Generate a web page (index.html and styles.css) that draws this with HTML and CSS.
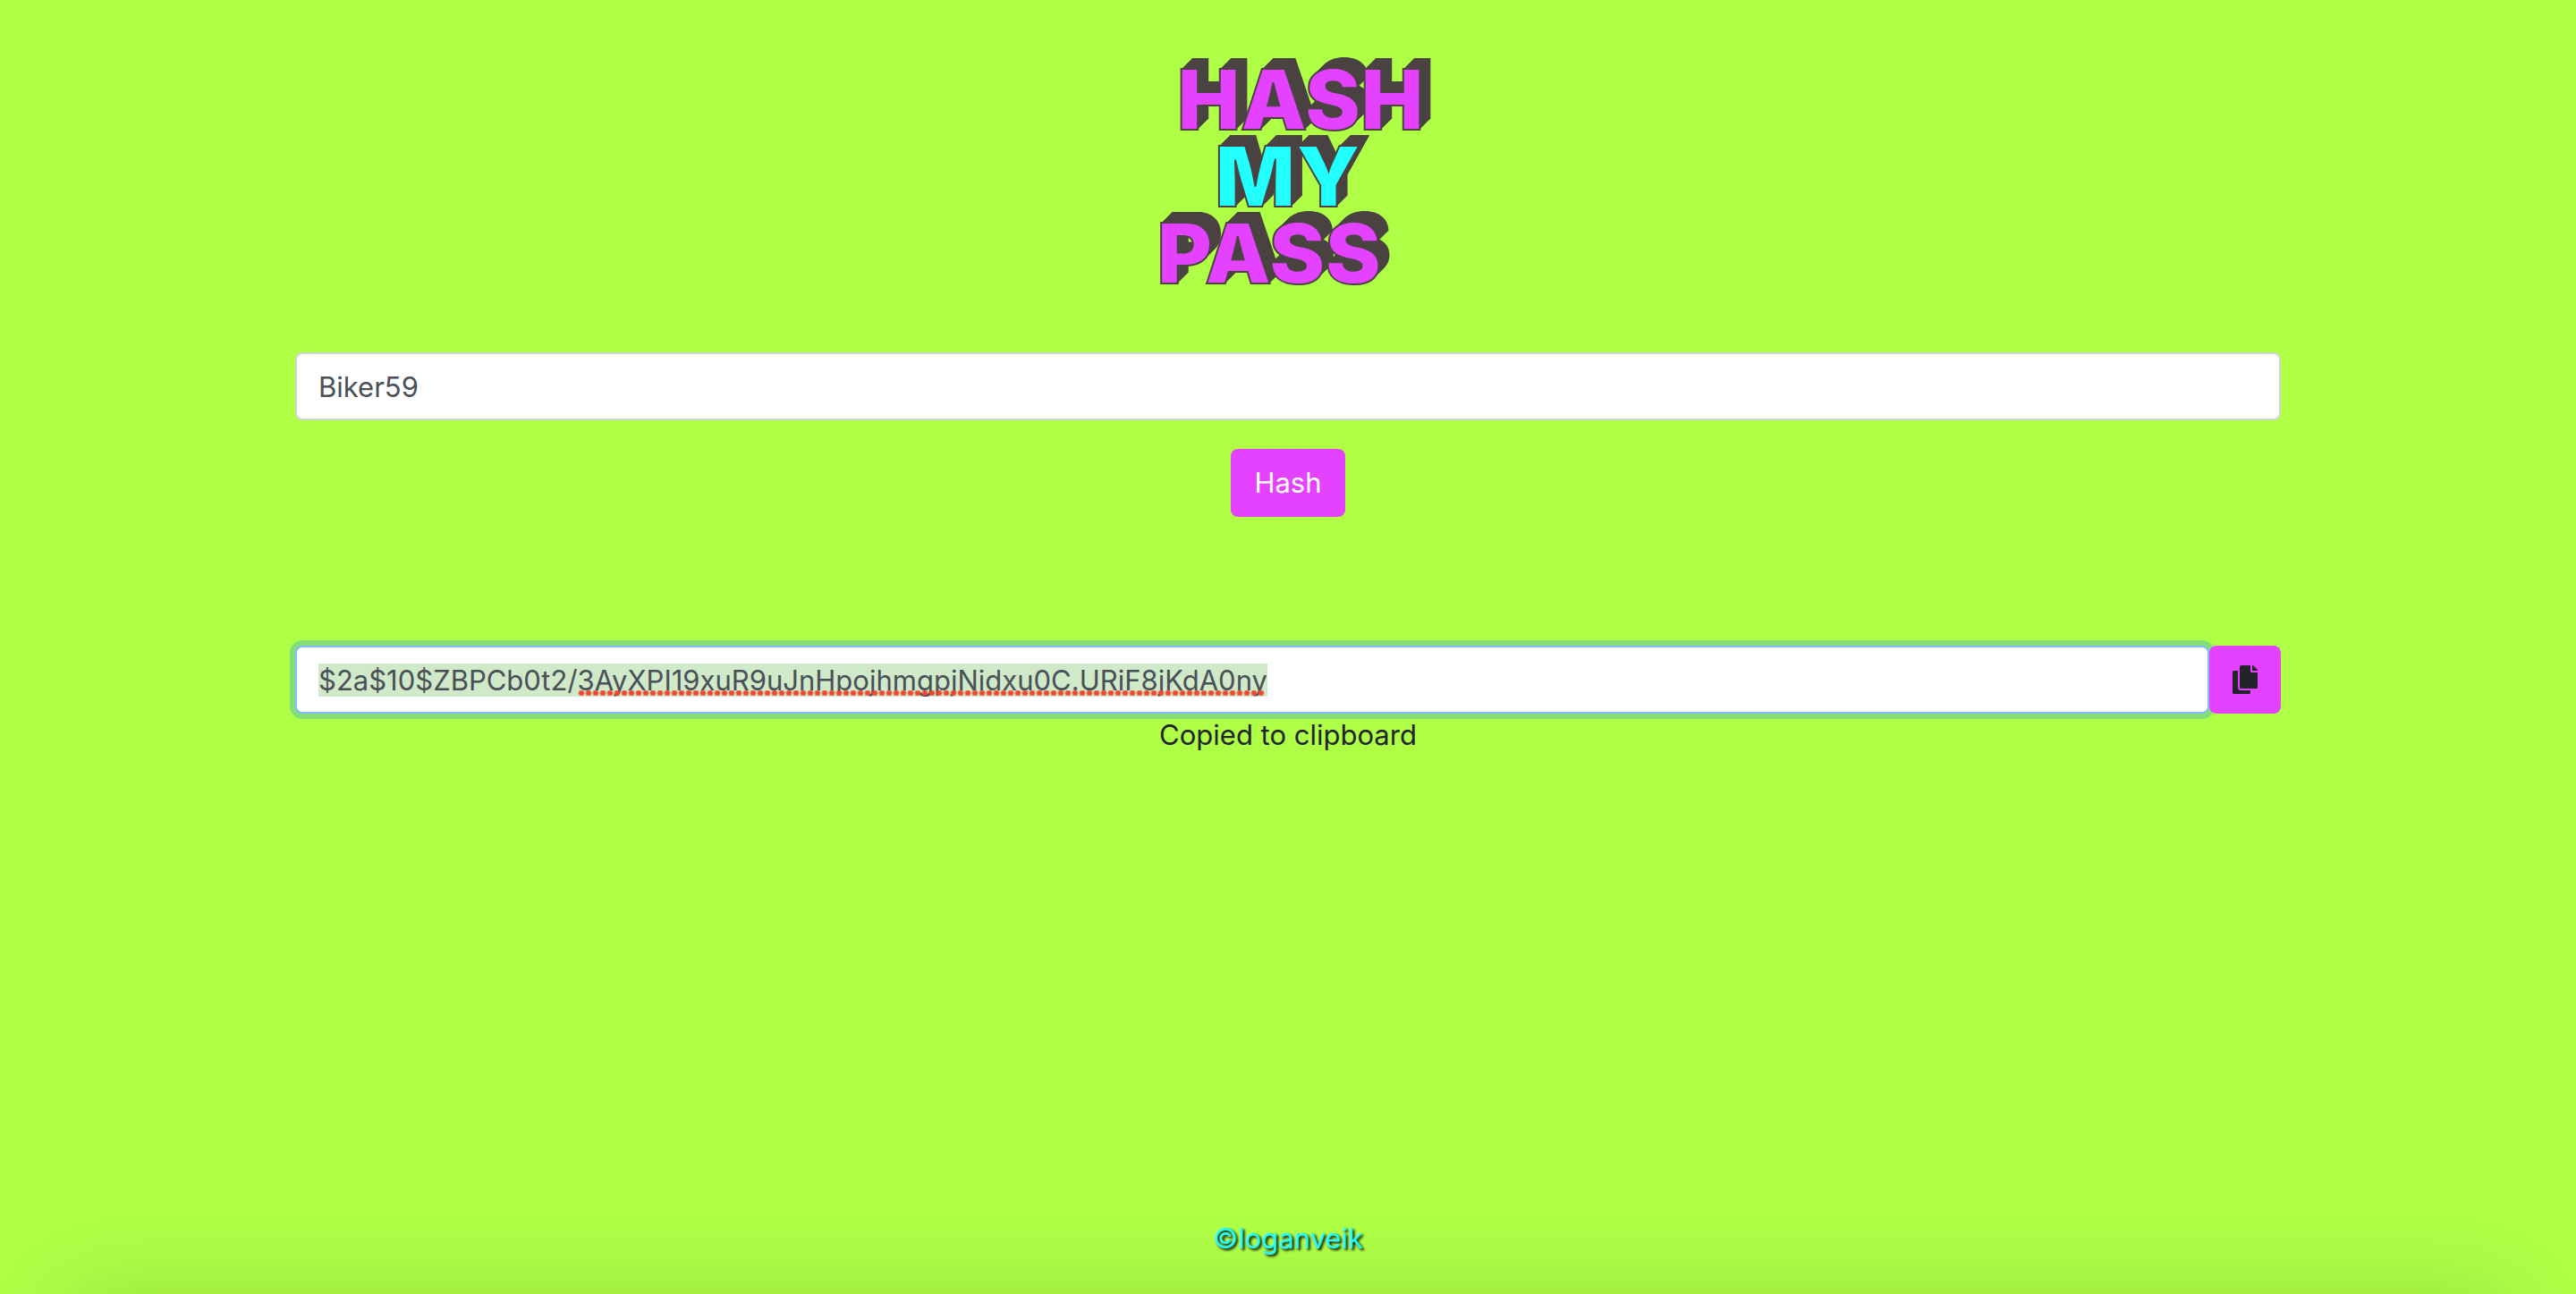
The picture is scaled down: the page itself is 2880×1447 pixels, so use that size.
FILE: index.html
```html
<!DOCTYPE html>
<html lang="en">
<head>
  <meta charset="utf-8">
  <meta name="viewport" content="width=device-width, initial-scale=1">
  <title>Hash My Pass</title>
  <link rel="stylesheet" href="styles.css">
</head>
<body>
  <main class="container">
    <h1 class="logo">
      <span class="logo-line logo-hash">HASH</span>
      <span class="logo-line logo-my">MY</span>
      <span class="logo-line logo-pass">PASS</span>
    </h1>

    <form class="hash-form">
      <input class="field" type="text" value="Biker59" aria-label="Password" spellcheck="false">
      <button class="btn" type="button">Hash</button>
    </form>

    <div class="result">
      <div class="result-box">
        <input class="field field-active" id="hash" type="text" value="$2a$10$ZBPCb0t2/3AyXPI19xuR9uJnHpojhmgpjNidxu0C.URiF8jKdA0ny" aria-label="Hashed password" spellcheck="false">
        <span class="spelling"></span>
      </div>
      <button class="btn btn-copy" type="button" aria-label="Copy to clipboard">
        <svg class="icon" viewBox="0 0 28 32" aria-hidden="true">
          <path d="M20 28v2.500a1.500 1.500 0 0 1-1.500 1.500h-17A1.500 1.500 0 0 1 0 30.500v-23A1.500 1.500 0 0 1 1.500 6H6v18.500A3.500 3.500 0 0 0 9.500 28zM20 6.500V0H9.500A1.500 1.500 0 0 0 8 1.500v23A1.500 1.500 0 0 0 9.500 26h17a1.500 1.500 0 0 0 1.500-1.500V8h-6.500A1.500 1.500 0 0 1 20 6.500zM27.560 4.560L23.440.44A1.500 1.500 0 0 0 22.380 0H22v6h6v-.38a1.500 1.500 0 0 0-.44-1.060z"/>
        </svg>
      </button>
    </div>
    <p class="status" role="status">Copied to clipboard</p>
  </main>

  <footer class="footer"><a class="credit" href="#">©loganveik</a></footer>
  <script src="script.js"></script>
</body>
</html>
```
FILE: styles.css
```css
* {
  box-sizing: border-box;
}

body {
  display: flex;
  flex-direction: column;
  min-height: 100vh;
  margin: 0;
  overflow: hidden;
  background: #afff47;
  color: #212529;
  font-family: Inter, "Liberation Sans", sans-serif;
  font-size: 31px;
  line-height: 48px;
}

/* soft shade along the lower edge of the window */
body::after {
  content: "";
  position: fixed;
  top: 100%;
  left: 80px;
  right: 80px;
  height: 200px;
  box-shadow: 0 8px 100px rgba(0, 0, 0, 0.15);
  pointer-events: none;
}

.container {
  flex: 1;
  width: 100%;
  max-width: 2280px;
  margin: 0 auto;
  padding: 68px 30px 0;
}

.logo {
  display: flex;
  flex-direction: column;
  align-items: center;
  margin: 0 0 68px;
  font-size: 94px;
  font-weight: 900;
  line-height: 86px;
}

.logo-line {
  color: #e542ff;
  -webkit-text-stroke: 2px #4a4342;
  text-shadow:
    1px -1px #4a4342, 2px -2px #4a4342, 3px -3px #4a4342,
    4px -4px #4a4342, 5px -5px #4a4342, 6px -6px #4a4342,
    7px -7px #4a4342, 8px -8px #4a4342, 9px -9px #4a4342,
    10px -10px #4a4342, 11px -11px #4a4342, 12px -12px #4a4342;
}

.logo-hash {
  padding-left: 28px;
}

.logo-my {
  color: #21ffff;
}

.logo-pass {
  padding-right: 42px;
}

.hash-form {
  display: flex;
  flex-direction: column;
  align-items: center;
  gap: 32px;
  margin-bottom: 144px;
}

.field {
  display: block;
  width: 100%;
  height: 76px;
  padding: 12px 24px;
  border: 2px solid #ced4da;
  border-radius: 8px;
  outline: none;
  background: #fff;
  color: #495057;
  font: inherit;
}

.field-active {
  border-color: #80bdff;
  box-shadow: 0 0 0 6px rgba(0, 123, 255, 0.25);
}

.field::selection {
  background: #d0e9c8;
  color: #495057;
}

.btn {
  height: 76px;
  padding: 12px 26px;
  border: 0;
  border-radius: 8px;
  background: #e542ff;
  color: #fff;
  font: inherit;
}

.result {
  display: flex;
}

.result-box {
  position: relative;
  flex: 1;
}

/* row of dots under the part the spell checker flags */
.spelling {
  position: absolute;
  left: 316px;
  top: 50px;
  width: 768px;
  height: 6px;
  background: radial-gradient(circle at center, #f4442e 2px, #f4442e99 3px, transparent 4px) 0 0 / 8px 6px repeat-x;
}

.btn-copy {
  position: relative;
  display: flex;
  align-items: center;
  color: #212529;
}

.icon {
  width: 28px;
  height: 32px;
  fill: currentColor;
}

.status {
  margin: 0;
  text-align: center;
}

.footer {
  padding-bottom: 38px;
  text-align: center;
}

.credit {
  color: #21ffff;
  text-decoration: none;
  text-shadow: 2px 2px 3px #000;
}
```
FILE: script.js
```js
const hash = document.getElementById("hash");
hash.focus();
hash.select();
```
